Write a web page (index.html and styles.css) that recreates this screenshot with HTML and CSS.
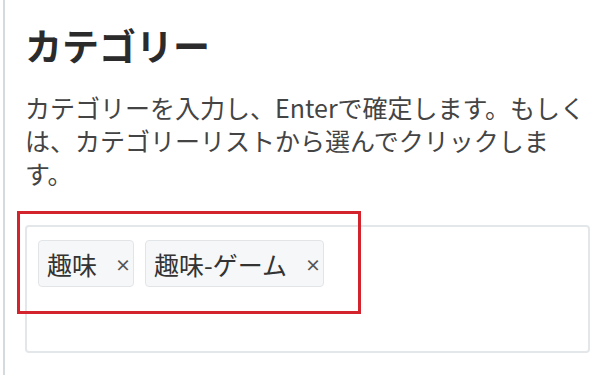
FILE: index.html
```html
<!DOCTYPE html>
<html lang="ja">
<head>
<meta charset="utf-8">
<link rel="stylesheet" href="styles.css">
</head>
<body>
<div class="panel">
  <h1 class="title">カテゴリー</h1>
  <p class="desc">カテゴリーを入力し、Enterで確定します。もしくは、カテゴリーリストから選んでクリックします。</p>
  <div class="field">
    <div class="tags">
      <span class="tag"><span class="tag-label">趣味</span><span class="tag-x">×</span></span>
      <span class="tag"><span class="tag-label">趣味-ゲーム</span><span class="tag-x">×</span></span>
    </div>
    <div class="highlight"></div>
  </div>
</div>
</body>
</html>
```

FILE: styles.css
```css
html, body {
  margin: 0;
  padding: 0;
  background: #ffffff;
}
body {
  width: 600px;
  height: 375px;
  overflow: hidden;
  font-family: "Noto Sans CJK JP", "Noto Sans", sans-serif;
  color: #333333;
}
.panel {
  margin-left: 3px;
  border-left: 2px solid #d5dade;
  height: 375px;
  box-sizing: border-box;
  padding: 21px 10px 0 20px;
}
.title {
  margin: 0;
  font-size: 37px;
  font-weight: 700;
  line-height: 48px;
  color: #2b2b2b;
}
.desc {
  margin: 22px 0 0;
  font-size: 25px;
  line-height: 33px;
  color: #444444;
}
.field {
  position: relative;
  margin-top: 35px;
  height: 128px;
  border: 2px solid #e4e7ea;
  border-radius: 4px;
  box-sizing: border-box;
  padding: 13px 11px;
}
.tags {
  display: flex;
  gap: 11px;
}
.tag {
  display: inline-flex;
  align-items: center;
  height: 47px;
  box-sizing: border-box;
  padding: 0 2px 0 8px;
  border: 1px solid #e2e5e8;
  border-radius: 4px;
  background: #f6f7f8;
  font-size: 25px;
  color: #333333;
}
.tag-x {
  margin-left: 18px;
  font-size: 16px;
  font-weight: 700;
  color: #555555;
}
.highlight {
  position: absolute;
  left: -10px;
  top: -16px;
  width: 344px;
  height: 103px;
  border: 3px solid #d3232c;
  box-sizing: border-box;
}
```
